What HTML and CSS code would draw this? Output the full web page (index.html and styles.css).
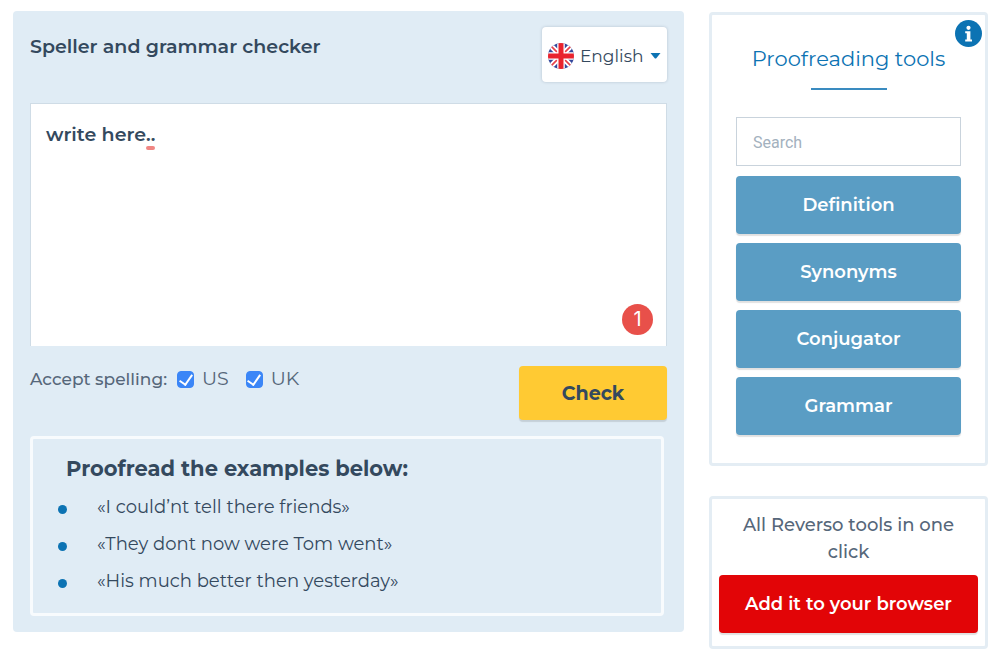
FILE: index.html
```html
<!DOCTYPE html>
<html lang="en">
<head>
  <meta charset="UTF-8">
  <meta name="viewport" content="width=device-width, initial-scale=1">
  <title>Speller and grammar checker</title>
  <link rel="stylesheet" href="styles.css">
</head>
<body>

<div class="page">
  <main class="checker">
    <header class="checker-head">
      <h1><label for="textInput">Speller and grammar checker</label></h1>
      <div class="lang">
        <svg class="flag" viewBox="0 0 26 26" aria-hidden="true">
          <clipPath id="round"><circle cx="13" cy="13" r="13"/></clipPath>
          <g clip-path="url(#round)">
            <rect width="26" height="26" fill="#34479c"/>
            <path d="M0 0L26 26M26 0L0 26" stroke="#fff" stroke-width="5.4"/>
            <path d="M0 0L26 26M26 0L0 26" stroke="#e8414a" stroke-width="1.6"/>
            <path d="M13 0V26M0 13H26" stroke="#fff" stroke-width="7.6"/>
            <path d="M13 0V26M0 13H26" stroke="#e9232d" stroke-width="5"/>
          </g>
        </svg>
        <select class="lang-select" aria-label="Language">
          <option>English</option>
          <option>French</option>
        </select>
        <svg class="caret" viewBox="0 0 10 6" aria-hidden="true"><path d="M0 0H10L6 5Q5 6 4 5Z" fill="#0c73b3"/></svg>
      </div>
    </header>

    <div class="editor">
      <textarea id="textInput" spellcheck="false">write here..</textarea>
      <span class="error-mark"></span>
      <span class="error-count">1</span>
    </div>

    <div class="controls">
      <div class="spelling">
        <span class="spelling-title">Accept spelling:</span>
        <label><input type="checkbox" checked>US</label>
        <label><input type="checkbox" checked>UK</label>
      </div>
      <button class="btn check-btn">Check</button>
    </div>

    <section class="examples">
      <h2>Proofread the examples below:</h2>
      <ul>
        <li>«I could’nt tell there friends»</li>
        <li>«They dont now were Tom went»</li>
        <li>«His much better then yesterday»</li>
      </ul>
    </section>
  </main>

  <aside class="side">
    <section class="card tools">
      <button class="info-btn" aria-label="Info">
        <svg viewBox="0 0 27 27"><circle cx="13.5" cy="13.5" r="13.5" fill="#0c73b3"/><circle cx="13.5" cy="7.8" r="2.1" fill="#fff"/><path d="M10.2 11.2H15.4V19.4H17V21.5H10.2V19.4H11.8V13.3H10.2Z" fill="#fff"/></svg>
      </button>
      <h2>Proofreading tools</h2>
      <input class="search" type="text" placeholder="Search" aria-label="Search">
      <div class="tool-list">
        <button class="btn">Definition</button>
        <button class="btn">Synonyms</button>
        <button class="btn">Conjugator</button>
        <button class="btn">Grammar</button>
      </div>
    </section>

    <section class="card promo">
      <p>All Reverso tools in one click</p>
      <button class="btn add-btn">Add it to your browser</button>
    </section>
  </aside>
</div>

</body>
</html>
```
FILE: styles.css
```css
* { box-sizing: border-box; }
:root {
  --dark: #34495e;
  --grey: #56677a;
  --blue: #0c73b3;
  --panel: #e0ecf5;
  --line: #e4edf4;
}
body {
  margin: 0;
  background: #fff;
  color: var(--dark);
  font-family: Montserrat, Inter, sans-serif;
}
h1, h2, p, ul { margin: 0; padding: 0; }

.page {
  display: flex;
  align-items: flex-start;
  gap: 25px;
  padding: 11px 12px 0 13px;
}

/* Checker */
.checker {
  flex: 1;
  padding: 16px 17px;
  background: var(--panel);
  border-radius: 4px;
}
.checker-head {
  display: flex;
  justify-content: space-between;
  align-items: flex-start;
  margin-bottom: 21px;
}
.checker-head h1 {
  font-size: 19px;
  font-weight: 600;
  line-height: 40px;
}
.lang {
  display: flex;
  align-items: center;
  gap: 6px;
  height: 55px;
  padding: 2px 6px 0;
  background: #fff;
  border-radius: 4px;
  box-shadow: 0 0 3px rgba(52,73,94,0.25);
}
.flag { width: 26px; height: 26px; }
.caret { width: 11px; height: 6px; }
.lang-select {
  appearance: none;
  border: none;
  background: none;
  padding: 0;
  color: var(--dark);
  font-family: inherit;
  font-size: 17px;
}

.editor { position: relative; }
.editor textarea {
  display: block;
  width: 100%;
  height: 243px;
  padding: 16px 15px;
  border: 1px solid #cfdce6;
  border-bottom: none;
  border-radius: 0;
  outline: none;
  resize: none;
  color: var(--dark);
  font-family: inherit;
  font-size: 19px;
  font-weight: 600;
  line-height: 30px;
}
.error-mark {
  position: absolute;
  top: 43px; left: 116px;
  width: 9px; height: 4px;
  background: #f08683;
  border-radius: 2px;
}
.error-count {
  position: absolute;
  right: 14px; bottom: 11px;
  width: 31px; height: 31px;
  border-radius: 50%;
  background: #e8504a;
  color: #fff;
  font-family: Inter, sans-serif;
  font-size: 20px;
  line-height: 31px;
  text-align: center;
}

.controls {
  display: flex;
  justify-content: space-between;
  align-items: flex-start;
  margin: 20px 0 16px;
}
.spelling {
  display: flex;
  gap: 17px;
  color: var(--grey);
  font-size: 19px;
  line-height: 26px;
}
.spelling-title {
  margin-right: -7px;
  font-size: 17px;
  font-weight: 500;
}
.spelling label {
  display: flex;
  align-items: center;
  gap: 8px;
}
.spelling input {
  appearance: none;
  display: flex;
  justify-content: center;
  width: 17px; height: 17px;
  margin: 0;
  border: 1px solid #a9b8c6;
  border-radius: 4px;
  background: #fff;
}
.spelling input:checked {
  border-color: #3b86f7;
  background: #3b86f7;
}
.spelling input:checked::after {
  content: "";
  width: 6px; height: 11px;
  border: solid #fff;
  border-width: 0 2px 2px 0;
  transform: rotate(35deg);
}

.btn {
  height: 58px;
  border: none;
  border-radius: 4px;
  background: #5a9dc4;
  box-shadow: 0 2px 1px rgba(0,0,0,0.12);
  color: #fff;
  font-family: inherit;
  font-size: 18px;
  font-weight: 600;
  cursor: pointer;
}
.check-btn {
  width: 148px; height: 54px;
  background: #ffca33;
  color: var(--dark);
  font-size: 19px;
  font-weight: 700;
}

.examples {
  margin-right: 3px;
  padding: 9px 33px 13px;
  border: 3px solid #f8fbfd;
  border-radius: 4px;
}
.examples h2 {
  font-size: 21px;
  font-weight: 700;
  line-height: 41px;
}
.examples ul { list-style: none; }
.examples li {
  display: flex;
  align-items: center;
  gap: 30px;
  margin-left: -8px;
  font-size: 18px;
  line-height: 37px;
}
.examples li::before {
  content: "";
  width: 9px; height: 9px;
  margin-top: 4px;
  border-radius: 50%;
  background: var(--blue);
}

/* Side column */
.side { width: 279px; }
.card {
  position: relative;
  margin-top: 1px;
  border: 3px solid var(--line);
  border-radius: 4px;
  text-align: center;
}
.tools { padding: 29px 24px 28px; }
.tools h2 {
  color: var(--blue);
  font-size: 21px;
  font-weight: 400;
  line-height: 30px;
}
.tools h2::after {
  content: "";
  display: block;
  width: 76px; height: 2px;
  margin: 14px auto 27px;
  background: #3a8bc0;
}
.info-btn {
  position: absolute;
  top: 5px; right: 3px;
  width: 27px; height: 27px;
  padding: 0;
  border: none;
  background: none;
  cursor: pointer;
}
.info-btn svg { display: block; }
.search {
  display: block;
  width: 100%; height: 49px;
  margin-bottom: 10px;
  padding: 2px 16px 0;
  border: 1px solid #c9d3dc;
  font-family: Roboto, sans-serif;
  font-size: 16px;
}
.search::placeholder { color: #a3b1be; }
.tool-list {
  display: flex;
  flex-direction: column;
  gap: 9px;
}

.promo {
  margin-top: 30px;
  padding: 13px 7px 13px;
}
.promo p {
  padding: 0 18px;
  margin-bottom: 9px;
  color: var(--grey);
  font-size: 18px;
  font-weight: 500;
  line-height: 27px;
}
.add-btn {
  width: 100%;
  background: #e20507;
}
```
